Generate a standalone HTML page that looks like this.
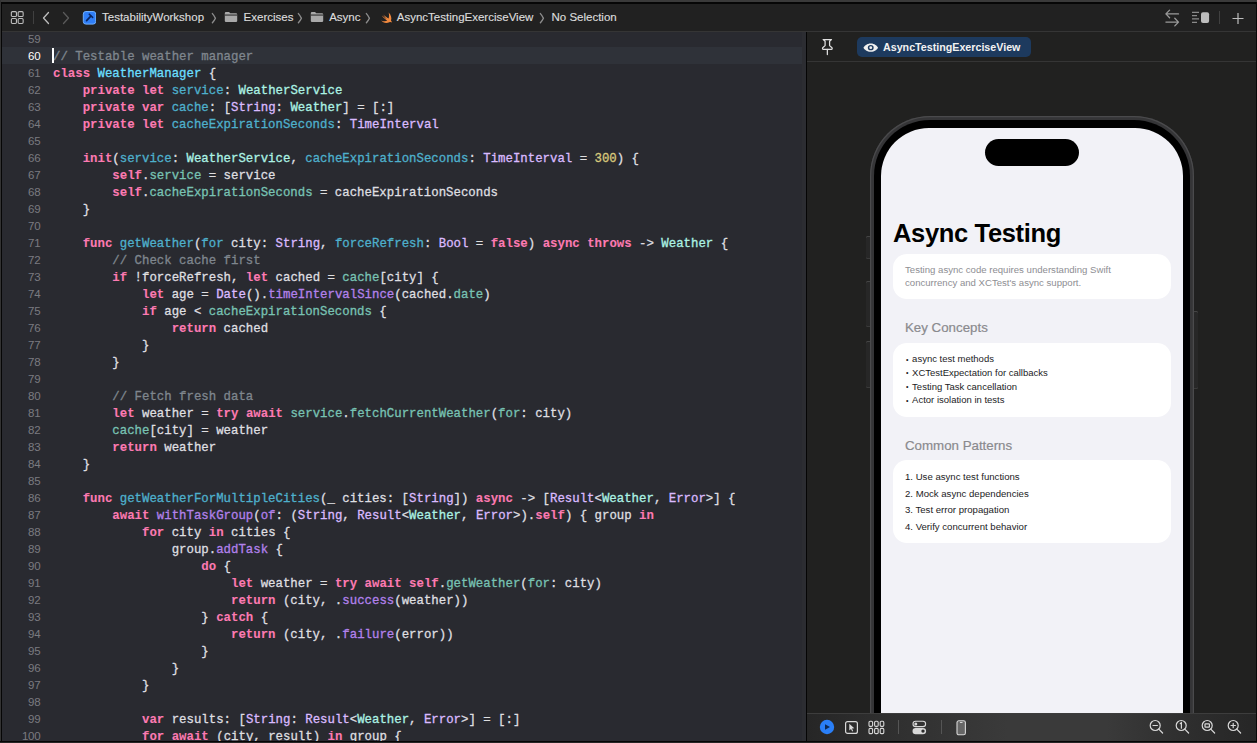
<!DOCTYPE html>
<html><head><meta charset="utf-8">
<style>
*{margin:0;padding:0;box-sizing:border-box}
html,body{width:1257px;height:743px;overflow:hidden;background:#212121}
body{position:relative;font-family:"Liberation Sans",sans-serif}
.abs{position:absolute}
#topband{left:0;top:0;width:1257px;height:2px;background:#3a3a3a}
#topline{left:0;top:2px;width:1257px;height:2px;background:#060606}
#leftband{left:0;top:0;width:1px;height:743px;background:#333}
#leftline{left:1px;top:2px;width:1px;height:741px;background:#060606}
#toolbar{left:2px;top:4px;width:1255px;height:27px;background:#212121}
#tbline{left:2px;top:31px;width:1255px;height:1px;background:#353535}
#editor{left:2px;top:32px;width:804px;height:709px;background:#292a30;overflow:hidden}
#divider{left:806px;top:32px;width:1px;height:709px;background:#050505}
#canvas{left:807px;top:32px;width:450px;height:709px;background:#212120;overflow:hidden}
#botline{left:0;top:741px;width:1257px;height:1px;background:#060606}
#botband{left:0;top:742px;width:1257px;height:1px;background:#262626}

/* code */
#curline{left:0;top:15px;width:804px;height:17px;background:#2f3239}
#nums{left:0;top:-0.8px;width:38.2px;font-family:"Liberation Sans",sans-serif;font-size:11.5px;letter-spacing:-0.35px;color:#7b7b80;text-align:right}
.nm{height:17px;line-height:17px}
.nm.cur{color:#fff}
#code{left:51px;top:0px;font-family:"Liberation Mono",monospace;font-size:12.37px;color:#dfdfe0}
.ln{height:17px;line-height:17px;white-space:pre;-webkit-text-stroke:0.3px currentColor}
.ln b{font-weight:bold;color:#fc7ab2;-webkit-text-stroke:0.1px currentColor}
.ln i{font-style:normal}
.td{color:#6bdfff}.od{color:#4eb0cc}.pt{color:#acf2e4}.ot{color:#dabaff}.pv{color:#78c2b3}.of{color:#b281eb}.n{color:#d9c97c}.c{color:#7f868e}
#cursor{left:50px;top:16px;width:2px;height:15px;background:#fff}

/* breadcrumb */
.crumb{font-size:11.5px;color:#dcdcdc;-webkit-text-stroke:0.15px currentColor;top:6.2px;line-height:14px;white-space:nowrap}
.chev{top:10px;color:#7a7a7a;font-size:11px}

/* phone */
.btn{background:#272727;border-radius:1.5px;box-shadow:inset 0 1px 0 #454545,inset 0 -1px 0 #3a3a3a}
.frame{left:62.5px;top:83.5px;width:324.5px;height:800px;border-radius:60px;background:#353537;box-shadow:inset 0 0 0 1.2px #4a4a4c}
.bezel{left:66.8px;top:87.8px;width:316px;height:800px;border-radius:56px;background:#000}
.screen{left:74px;top:95.6px;width:302px;height:800px;border-radius:48px;background:#f2f2f7;overflow:hidden}
.island{left:104px;top:11px;width:94px;height:27px;border-radius:14px;background:#000}
.title{left:12px;top:91.3px;font-weight:bold;font-size:25.5px;letter-spacing:-0.34px;color:#000;white-space:nowrap}
.card{left:12px;width:278px;background:#fff;border-radius:14px}
.ctext{font-size:9.6px;color:#8e8e93;line-height:12.2px;white-space:nowrap}
.sec{left:24px;font-size:13.3px;line-height:16px;color:#8a8a8e;-webkit-text-stroke:0.2px currentColor;white-space:nowrap}
.item{font-size:9.4px;color:#1c1c1e;white-space:nowrap}
.item s{text-decoration:none;display:inline-block;width:6.6px;font-size:7px;line-height:0;vertical-align:0.5px;padding-left:0.6px}

#bbar{left:0;top:681px;width:450px;height:28px;background:linear-gradient(90deg,#262626 0px,#2e2e2e 70px,#3a3a3a 200px,#3a3a3a 300px,#2e2e2e 380px,#262626 450px)}
#bbline{left:0;top:681px;width:450px;height:1px;background:#3d3d3d}
#hdrline{left:0;top:29px;width:450px;height:1px;background:#353535}
</style></head><body>
<div id="topband" class="abs"></div>
<div id="topline" class="abs"></div>
<div id="toolbar" class="abs">
  <!-- grid icon -->
  <svg class="abs" style="left:8px;top:6px" width="16" height="16" viewBox="0 0 16 16">
    <g fill="none" stroke="#bdbdbd" stroke-width="1.1">
      <rect x="1.35" y="1.6" width="5.1" height="4.9" rx="1.1"/><rect x="8.15" y="1.6" width="5.0" height="4.9" rx="1.1"/>
      <rect x="1.35" y="8.55" width="5.1" height="4.9" rx="1.1"/><rect x="8.15" y="8.55" width="5.0" height="4.9" rx="1.1"/>
    </g>
  </svg>
  <div class="abs" style="left:31px;top:7px;width:1px;height:13px;background:#404040"></div>
  <svg class="abs" style="left:38px;top:7px" width="12" height="14" viewBox="0 0 12 14"><path d="M8.5 1.5 L3.5 7 L8.5 12.5" fill="none" stroke="#bdbdbd" stroke-width="1.3" stroke-linecap="round" stroke-linejoin="round"/></svg>
  <svg class="abs" style="left:58px;top:7px" width="12" height="14" viewBox="0 0 12 14"><path d="M3.5 1.5 L8.5 7 L3.5 12.5" fill="none" stroke="#5a5a5a" stroke-width="1.3" stroke-linecap="round" stroke-linejoin="round"/></svg>
  <!-- project icon -->
  <svg class="abs" style="left:80px;top:7px" width="14" height="14" viewBox="0 0 14 14">
    <rect x="1.3" y="0.5" width="12.4" height="12.6" rx="2.6" fill="#2f7ef7" stroke="#6fb0ff" stroke-width="1"/>
    <path d="M4.6 9.6 L8.6 5.4" fill="none" stroke="#0a2660" stroke-width="1.7" stroke-linecap="round"/>
    <path d="M7.3 3.2 L10.6 6.4" fill="none" stroke="#0a2660" stroke-width="1.6" stroke-linecap="round"/>
  </svg>
  <div class="crumb abs" id="c1" style="left:100px">TestabilityWorkshop</div>
<svg class="abs" style="left:209px;top:8px" width="6" height="12" viewBox="0 0 6 12"><path d="M1.4 1.6 Q3.2 3.6 4.4 6.2 Q3.2 8.8 1.4 10.8" fill="none" stroke="#8c8c8c" stroke-width="1.4" stroke-linecap="round" stroke-linejoin="round"/></svg>
<svg class="abs" style="left:222px;top:7px" width="14" height="12" viewBox="0 0 14 12"><path d="M0.8 2.2 Q0.8 1 2 1 H5 L6.3 2.3 H12 Q13.2 2.3 13.2 3.5 V10 Q13.2 11 12 11 H2 Q0.8 11 0.8 10 Z" fill="#a9a9a9"/><rect x="0.8" y="3.5" width="12.4" height="1.1" fill="#2e2e2e"/></svg>
<div class="crumb abs" id="c2" style="left:241.6px">Exercises</div>
<svg class="abs" style="left:295px;top:8px" width="6" height="12" viewBox="0 0 6 12"><path d="M1.4 1.6 Q3.2 3.6 4.4 6.2 Q3.2 8.8 1.4 10.8" fill="none" stroke="#8c8c8c" stroke-width="1.4" stroke-linecap="round" stroke-linejoin="round"/></svg>
<svg class="abs" style="left:308px;top:7px" width="14" height="12" viewBox="0 0 14 12"><path d="M0.8 2.2 Q0.8 1 2 1 H5 L6.3 2.3 H12 Q13.2 2.3 13.2 3.5 V10 Q13.2 11 12 11 H2 Q0.8 11 0.8 10 Z" fill="#a9a9a9"/><rect x="0.8" y="3.5" width="12.4" height="1.1" fill="#2e2e2e"/></svg>
<div class="crumb abs" id="c3" style="left:327.2px">Async</div>
<svg class="abs" style="left:363px;top:8px" width="6" height="12" viewBox="0 0 6 12"><path d="M1.4 1.6 Q3.2 3.6 4.4 6.2 Q3.2 8.8 1.4 10.8" fill="none" stroke="#8c8c8c" stroke-width="1.4" stroke-linecap="round" stroke-linejoin="round"/></svg>
<svg class="abs" style="left:377px;top:7px" width="14" height="13" viewBox="0 0 14 13"><path d="M9.6 1.6 C12 3.8 13 7.2 12 9.6 C12.6 10.3 12.9 11 12.8 11.6 C12.1 11 11.2 10.9 10.4 11.2 C7.3 12.6 3.9 11.8 2.2 9.4 C4.4 10.6 7 10.4 8.2 9.6 C6.2 8.2 4.2 6.2 2.8 4.4 C4.6 5.9 6.4 7.2 7.8 8 C6.4 6.6 5 4.8 4.2 3.4 C6 5 8 6.6 9.6 7.4 C10.2 5.6 10.2 3.5 9.6 1.6 Z" fill="#f0883e"/></svg>
<div class="crumb abs" id="c4" style="left:394.8px">AsyncTestingExerciseView</div>
<svg class="abs" style="left:537px;top:8px" width="6" height="12" viewBox="0 0 6 12"><path d="M1.4 1.6 Q3.2 3.6 4.4 6.2 Q3.2 8.8 1.4 10.8" fill="none" stroke="#8c8c8c" stroke-width="1.4" stroke-linecap="round" stroke-linejoin="round"/></svg>
<div class="crumb abs" id="c5" style="left:549.5px">No Selection</div>
  <!-- right icons -->
  <svg class="abs" style="left:1162px;top:5px" width="18" height="18" viewBox="0 0 18 18">
    <g fill="none" stroke="#9a9a9a" stroke-width="1.3" stroke-linecap="round" stroke-linejoin="round">
      <path d="M1.9 4.9 L14.5 4.9 M5.6 1.1 L1.9 4.9 L5.6 8.7"/><path d="M14.5 13.1 L1.9 13.1 M10.8 9.3 L14.5 13.1 L10.8 16.9"/>
    </g>
  </svg>
  <svg class="abs" style="left:1188px;top:6px" width="24" height="16" viewBox="0 0 24 16">
    <g stroke="#8a8a8a" stroke-width="1.2"><path d="M2 2.3H9M2 5.7H7M2 8.9H9M2 12.3H7"/></g>
    <rect x="11" y="2.2" width="8.1" height="10.9" rx="2" fill="#bdbdbd"/>
  </svg>
  <div class="abs" style="left:1217px;top:7px;width:1px;height:13px;background:#404040"></div>
  <svg class="abs" style="left:1229px;top:8px" width="14" height="14" viewBox="0 0 14 14"><path d="M7 1 V12 M1.5 6.5 H12.5" stroke="#bdbdbd" stroke-width="1.2"/></svg>
</div>
<div id="tbline" class="abs"></div>
<div id="editor" class="abs">
  <div id="curline" class="abs"></div>
  <div id="nums" class="abs">
<div class="nm">59</div>
<div class="nm cur">60</div>
<div class="nm">61</div>
<div class="nm">62</div>
<div class="nm">63</div>
<div class="nm">64</div>
<div class="nm">65</div>
<div class="nm">66</div>
<div class="nm">67</div>
<div class="nm">68</div>
<div class="nm">69</div>
<div class="nm">70</div>
<div class="nm">71</div>
<div class="nm">72</div>
<div class="nm">73</div>
<div class="nm">74</div>
<div class="nm">75</div>
<div class="nm">76</div>
<div class="nm">77</div>
<div class="nm">78</div>
<div class="nm">79</div>
<div class="nm">80</div>
<div class="nm">81</div>
<div class="nm">82</div>
<div class="nm">83</div>
<div class="nm">84</div>
<div class="nm">85</div>
<div class="nm">86</div>
<div class="nm">87</div>
<div class="nm">88</div>
<div class="nm">89</div>
<div class="nm">90</div>
<div class="nm">91</div>
<div class="nm">92</div>
<div class="nm">93</div>
<div class="nm">94</div>
<div class="nm">95</div>
<div class="nm">96</div>
<div class="nm">97</div>
<div class="nm">98</div>
<div class="nm">99</div>
<div class="nm">100</div>
  </div>
  <div id="code" class="abs">
<div class="ln"></div>
<div class="ln cur"><i class="c">// Testable weather manager</i></div>
<div class="ln"><b class="k">class</b> <i class="td">WeatherManager</i> {</div>
<div class="ln">    <b class="k">private</b> <b class="k">let</b> <i class="od">service</i>: <i class="pt">WeatherService</i></div>
<div class="ln">    <b class="k">private</b> <b class="k">var</b> <i class="od">cache</i>: [<i class="ot">String</i>: <i class="pt">Weather</i>] = [:]</div>
<div class="ln">    <b class="k">private</b> <b class="k">let</b> <i class="od">cacheExpirationSeconds</i>: <i class="ot">TimeInterval</i></div>
<div class="ln"></div>
<div class="ln">    <b class="k">init</b>(<i class="od">service</i>: <i class="pt">WeatherService</i>, <i class="od">cacheExpirationSeconds</i>: <i class="ot">TimeInterval</i> = <i class="n">300</i>) {</div>
<div class="ln">        <b class="k">self</b>.<i class="pv">service</i> = service</div>
<div class="ln">        <b class="k">self</b>.<i class="pv">cacheExpirationSeconds</i> = cacheExpirationSeconds</div>
<div class="ln">    }</div>
<div class="ln"></div>
<div class="ln">    <b class="k">func</b> <i class="od">getWeather</i>(<i class="od">for</i> city: <i class="ot">String</i>, <i class="od">forceRefresh</i>: <i class="ot">Bool</i> = <b class="k">false</b>) <b class="k">async</b> <b class="k">throws</b> -&gt; <i class="pt">Weather</i> {</div>
<div class="ln">        <i class="c">// Check cache first</i></div>
<div class="ln">        <b class="k">if</b> !forceRefresh, <b class="k">let</b> cached = <i class="pv">cache</i>[city] {</div>
<div class="ln">            <b class="k">let</b> age = <i class="ot">Date</i>().<i class="of">timeIntervalSince</i>(cached.<i class="pv">date</i>)</div>
<div class="ln">            <b class="k">if</b> age &lt; <i class="pv">cacheExpirationSeconds</i> {</div>
<div class="ln">                <b class="k">return</b> cached</div>
<div class="ln">            }</div>
<div class="ln">        }</div>
<div class="ln"></div>
<div class="ln">        <i class="c">// Fetch fresh data</i></div>
<div class="ln">        <b class="k">let</b> weather = <b class="k">try</b> <b class="k">await</b> <i class="pv">service</i>.<i class="pv">fetchCurrentWeather</i>(<i class="pv">for</i>: city)</div>
<div class="ln">        <i class="pv">cache</i>[city] = weather</div>
<div class="ln">        <b class="k">return</b> weather</div>
<div class="ln">    }</div>
<div class="ln"></div>
<div class="ln">    <b class="k">func</b> <i class="od">getWeatherForMultipleCities</i>(_ cities: [<i class="ot">String</i>]) <b class="k">async</b> -&gt; [<i class="ot">Result</i>&lt;<i class="pt">Weather</i>, <i class="ot">Error</i>&gt;] {</div>
<div class="ln">        <b class="k">await</b> <i class="of">withTaskGroup</i>(<i class="of">of</i>: (<i class="ot">String</i>, <i class="ot">Result</i>&lt;<i class="pt">Weather</i>, <i class="ot">Error</i>&gt;).<b class="k">self</b>) { group <b class="k">in</b></div>
<div class="ln">            <b class="k">for</b> city <b class="k">in</b> cities {</div>
<div class="ln">                group.<i class="of">addTask</i> {</div>
<div class="ln">                    <b class="k">do</b> {</div>
<div class="ln">                        <b class="k">let</b> weather = <b class="k">try</b> <b class="k">await</b> <b class="k">self</b>.<i class="pv">getWeather</i>(<i class="pv">for</i>: city)</div>
<div class="ln">                        <b class="k">return</b> (city, .<i class="of">success</i>(weather))</div>
<div class="ln">                    } <b class="k">catch</b> {</div>
<div class="ln">                        <b class="k">return</b> (city, .<i class="of">failure</i>(error))</div>
<div class="ln">                    }</div>
<div class="ln">                }</div>
<div class="ln">            }</div>
<div class="ln"></div>
<div class="ln">            <b class="k">var</b> results: [<i class="ot">String</i>: <i class="ot">Result</i>&lt;<i class="pt">Weather</i>, <i class="ot">Error</i>&gt;] = [:]</div>
<div class="ln">            <b class="k">for</b> <b class="k">await</b> (city, result) <b class="k">in</b> group {</div>
  </div>
  <div id="cursor" class="abs"></div>
  <div class="abs" style="left:800px;top:0;width:4px;height:709px;background:#2c2d32"></div>
</div>
<div id="divider" class="abs"></div>
<div id="canvas" class="abs">
  <div id="hdrline" class="abs"></div>
  <!-- pin -->
  <svg class="abs" style="left:13px;top:6px" width="14" height="18" viewBox="0 0 14 18">
    <g fill="none" stroke="#e0e0e0" stroke-width="1.25" stroke-linejoin="round">
      <path d="M3.2 1.5 H11.5 L9.6 3.2 V7.6 L12 9.8 Q12.6 11.3 11.3 11.3 H3.4 Q2.1 11.3 2.7 9.8 L5.1 7.6 V3.2 Z"/>
      <path d="M7.35 11.3 V16.5" stroke-linecap="round"/>
    </g>
  </svg>
  <div class="abs" style="left:49.8px;top:4.8px;width:174px;height:20.2px;border-radius:5px;background:#1d3a5e"></div>
  <svg class="abs" style="left:56.4px;top:10.8px" width="15.5" height="9.3" viewBox="0.3 0.7 16.4 10.6" preserveAspectRatio="none">
    <path d="M8.5 1.2 C4.5 1.2 1.8 4 0.8 6 C1.8 8 4.5 10.8 8.5 10.8 C12.5 10.8 15.2 8 16.2 6 C15.2 4 12.5 1.2 8.5 1.2 Z" fill="#f0f0f0"/>
    <circle cx="8.5" cy="6" r="3.1" fill="#1d3a5e"/><circle cx="8.5" cy="6" r="1.5" fill="#f0f0f0"/>
  </svg>
  <div class="abs" id="chiptext" style="left:76px;top:8.2px;font-size:10.7px;font-weight:bold;color:#f2f2f2;white-space:nowrap;line-height:14px">AsyncTestingExerciseView</div>

  <div class="abs btn" style="left:58.5px;top:204px;width:5px;height:22.7px"></div>
  <div class="abs btn" style="left:58.5px;top:249.3px;width:5px;height:46px"></div>
  <div class="abs btn" style="left:58.5px;top:308.9px;width:5px;height:47px"></div>
  <div class="abs btn" style="left:386px;top:278.5px;width:5px;height:78.5px"></div>
  <div class="frame abs"></div>
  <div class="bezel abs"></div>
  <div class="screen abs">
    <div class="island abs"></div>
    <div class="title abs">Async Testing</div>
    <div class="card abs" style="top:126.5px;height:44.7px"></div>
    <div class="ctext abs" style="left:24px;top:136.8px">Testing async code requires understanding Swift<br>concurrency and XCTest's async support.</div>
    <div class="sec abs" style="top:192.1px">Key Concepts</div>
    <div class="card abs" style="top:215.5px;height:73.8px"></div>
    <div class="item abs" style="left:24.5px;top:224.6px;line-height:13.7px;font-size:9.5px"><s>•</s>async test methods<br><s>•</s>XCTestExpectation for callbacks<br><s>•</s>Testing Task cancellation<br><s>•</s>Actor isolation in tests</div>
    <div class="sec abs" style="top:310.5px">Common Patterns</div>
    <div class="card abs" style="top:332.9px;height:82.6px"></div>
    <div class="item abs" style="left:24px;top:341.3px;line-height:16.7px;font-size:9.6px">1. Use async test functions<br>2. Mock async dependencies<br>3. Test error propagation<br>4. Verify concurrent behavior</div>
  </div>

  <div id="bbar" class="abs"></div>
  <div id="bbline" class="abs"></div>
  <svg class="abs" style="left:12px;top:687px" width="16" height="16" viewBox="0 0 16 16"><circle cx="8" cy="8" r="7.2" fill="#2a7ff7"/><path d="M6 5.2 L11 8 L6 10.8 Z" fill="#0d2a55"/></svg>
<svg class="abs" style="left:37px;top:688px" width="15" height="15" viewBox="0 0 15 15"><rect x="1.6" y="1.6" width="11.8" height="11.8" rx="2" fill="none" stroke="#d8d8d8" stroke-width="1.2"/><path d="M5.3 3.8 L10.3 8.2 L8 8.4 L9.2 11 L8.2 11.4 L7 8.9 L5.3 10.5 Z" fill="#d8d8d8"/></svg>
<svg class="abs" style="left:61px;top:688px" width="17" height="15" viewBox="0 0 17 15"><g fill="none" stroke="#d8d8d8" stroke-width="1.1"><rect x="1" y="1.2" width="3.6" height="5.2" rx="1.2"/><rect x="6.6" y="1.2" width="3.6" height="5.2" rx="1.2"/><rect x="12.2" y="1.2" width="3.6" height="5.2" rx="1.2"/><rect x="1" y="8.4" width="3.6" height="5.2" rx="1.2"/><rect x="6.6" y="8.4" width="3.6" height="5.2" rx="1.2"/><rect x="12.2" y="8.4" width="3.6" height="5.2" rx="1.2"/></g></svg>
<div class="abs" style="left:91px;top:688px;width:1px;height:14px;background:#555"></div>
<svg class="abs" style="left:105px;top:688px" width="15" height="15" viewBox="0 0 15 15"><rect x="1" y="1.2" width="12.6" height="5.4" rx="2.7" fill="none" stroke="#d8d8d8" stroke-width="1.1"/><circle cx="3.8" cy="3.9" r="1.5" fill="#d8d8d8"/><rect x="0.5" y="7.9" width="13.6" height="6.4" rx="3.2" fill="#d8d8d8"/><circle cx="11" cy="11.1" r="1.7" fill="#2a2a2a"/></svg>
<div class="abs" style="left:134px;top:688px;width:1px;height:14px;background:#555"></div>
<svg class="abs" style="left:149px;top:688px" width="11" height="16" viewBox="0 0 11 16"><rect x="1" y="0.8" width="8.4" height="14" rx="1.8" fill="#666" stroke="#d8d8d8" stroke-width="1.1"/><rect x="3.8" y="2" width="2.8" height="1" rx="0.5" fill="#d8d8d8"/></svg>
<svg class="abs" style="left:342px;top:687px" width="16" height="16" viewBox="0 0 16 16"><g fill="none" stroke="#d8d8d8" stroke-width="1.2" stroke-linecap="round"><circle cx="6.2" cy="6.5" r="5"/><path d="M9.8 10.2 L13.6 14"/><path d="M4 6.5 H8.4"/></g></svg>
<svg class="abs" style="left:368px;top:687px" width="16" height="16" viewBox="0 0 16 16"><g fill="none" stroke="#d8d8d8" stroke-width="1.2" stroke-linecap="round"><circle cx="6.2" cy="6.5" r="5"/><path d="M9.8 10.2 L13.6 14"/><path d="M5.3 4.6 L6.4 3.8 V9.2"/></g></svg>
<svg class="abs" style="left:394px;top:687px" width="16" height="16" viewBox="0 0 16 16"><g fill="none" stroke="#d8d8d8" stroke-width="1.2" stroke-linecap="round"><circle cx="6.2" cy="6.5" r="5"/><path d="M9.8 10.2 L13.6 14"/><rect x="4" y="4.8" width="4.4" height="3.4" rx="0.5"/></g></svg>
<svg class="abs" style="left:420px;top:687px" width="16" height="16" viewBox="0 0 16 16"><g fill="none" stroke="#d8d8d8" stroke-width="1.2" stroke-linecap="round"><circle cx="6.2" cy="6.5" r="5"/><path d="M9.8 10.2 L13.6 14"/><path d="M4 6.5 H8.4 M6.2 4.3 V8.7"/></g></svg>
</div>
<div id="leftband" class="abs"></div>
<div id="leftline" class="abs"></div>
<div class="abs" style="left:1256px;top:2px;width:1px;height:741px;background:#080808"></div>
<div id="botline" class="abs"></div>
<div id="botband" class="abs"></div>
</body></html>
